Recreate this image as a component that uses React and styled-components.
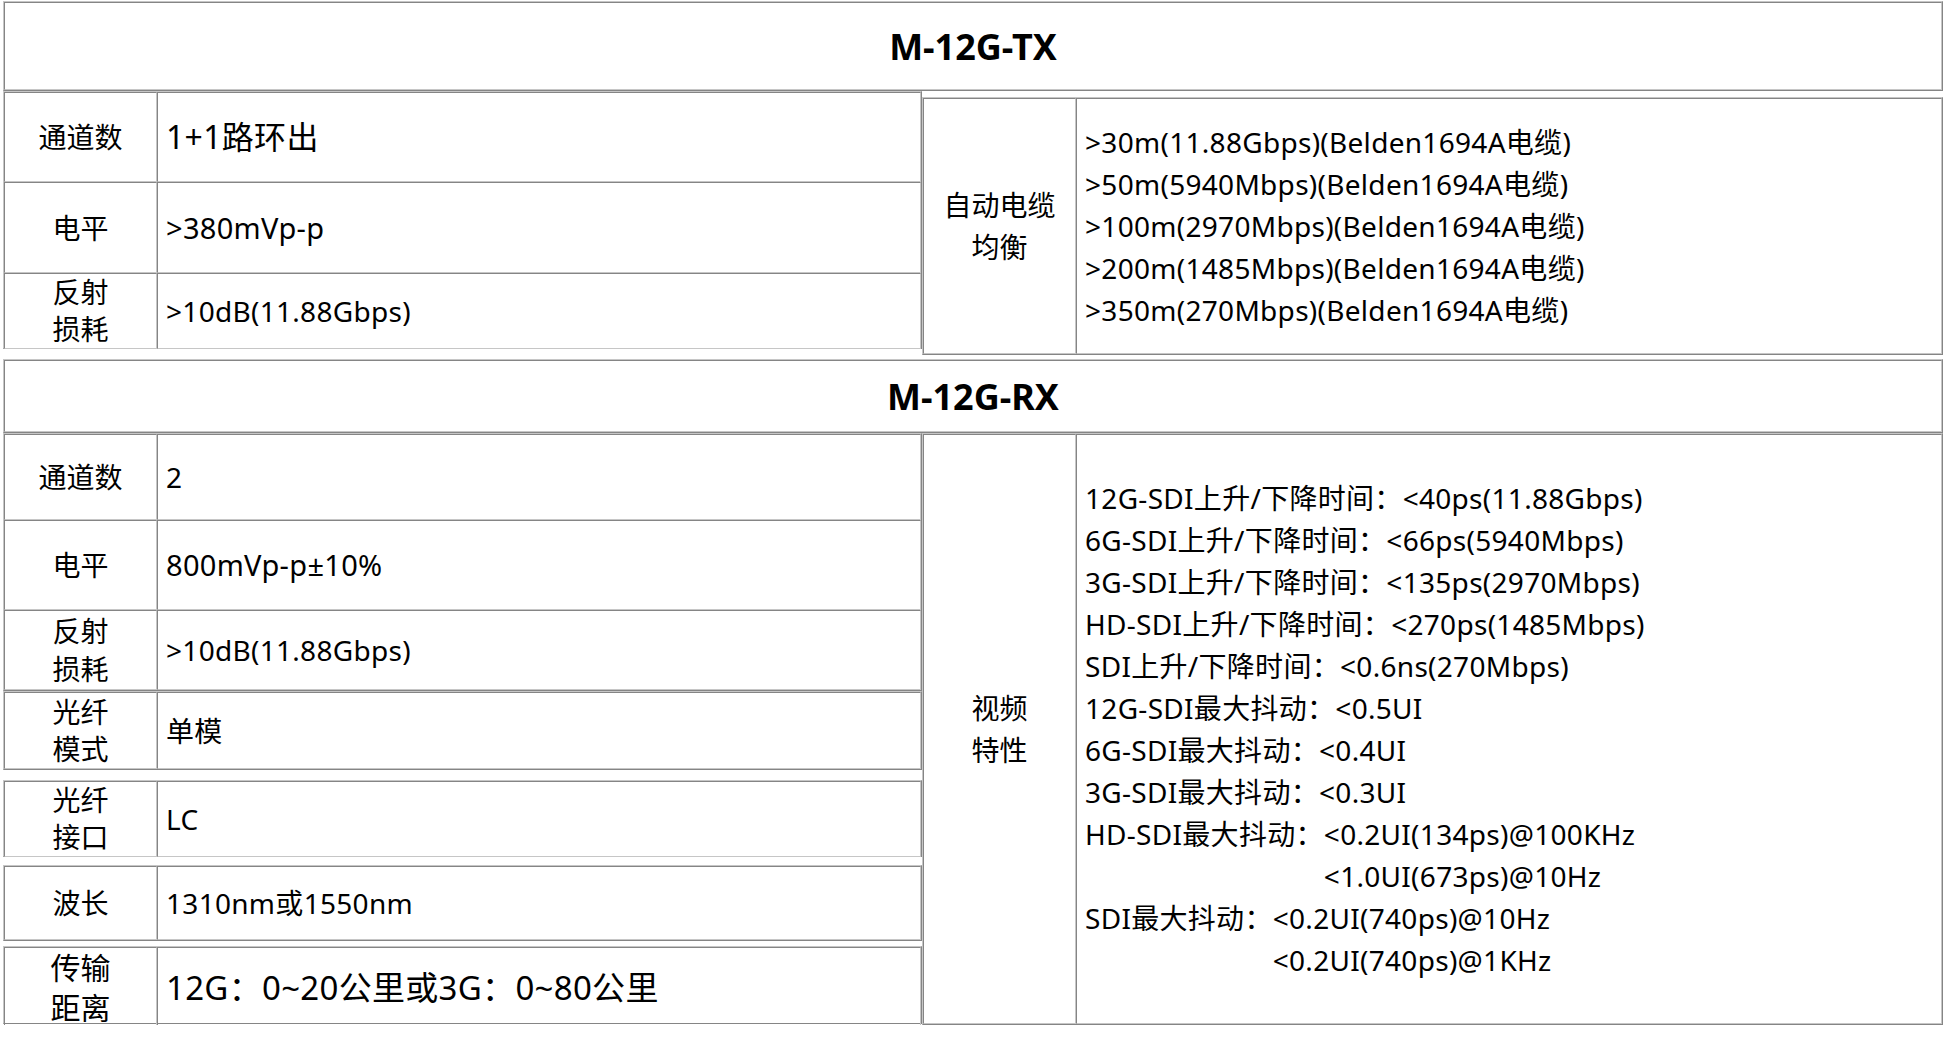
import styled, { createGlobalStyle } from "styled-components";

const LIGHT = "#c6c6c6";
const DARK = "#858585";

const GlobalStyle = createGlobalStyle`
  body {
    margin: 0;
    background: #fff;
    color: #000;
    font-family: "Noto Sans", "Noto Sans CJK SC", sans-serif;
  }
`;

const Page = styled.div`
  display: flex;
  flex-direction: column;
  padding: 1px 3px 0 3px;
`;

const Section = styled.section`
  display: flex;
  flex-direction: column;
  margin-top: ${(p) => p.$gap || 0}px;
`;

const TableBox = styled.div`
  display: flex;
  flex-direction: column;
  border: 1px solid;
  border-color: ${LIGHT} ${DARK} ${DARK} ${LIGHT};
  margin-top: ${(p) => p.$gap || 0}px;
`;

const TitleCell = styled.div`
  height: ${(p) => p.$h}px;
  box-sizing: border-box;
  border: 1px solid;
  border-color: ${DARK} ${LIGHT} ${LIGHT} ${DARK};
  display: flex;
  align-items: center;
  justify-content: center;
  font-size: 36px;
  font-weight: 700;
`;

const Split = styled.div`
  display: flex;
  align-items: flex-start;
`;

const LeftCol = styled.div`
  width: 919px;
  display: flex;
  flex-direction: column;
`;

const RightCol = styled.div`
  flex: 1;
  display: flex;
  flex-direction: column;
  margin-top: ${(p) => p.$gap || 0}px;
`;

const Row = styled.div`
  display: grid;
  grid-template-columns: 153px 1fr;
  height: ${(p) => p.$h}px;
`;

const Cell = styled.div`
  box-sizing: border-box;
  border: 1px solid;
  border-color: ${DARK} ${LIGHT} ${LIGHT} ${DARK};
  display: flex;
  align-items: center;
  font-size: ${(p) => p.$size || 28}px;
  line-height: 1.5;
  white-space: nowrap;
`;

const Label = styled(Cell)`
  justify-content: center;
  text-align: center;
  line-height: ${(p) => (p.$lh ? `${p.$lh}px` : "1.5")};
`;

const Value = styled(Cell)`
  padding-left: ${(p) => p.$pad || 8}px;
  letter-spacing: 0.3px;
`;

const Lines = styled.div`
  display: flex;
  flex-direction: column;
`;

const Line = styled.div`
  display: flex;
  align-items: flex-start;
`;

const Stack = styled.div`
  display: flex;
  flex-direction: column;
`;

const txLeft = [
  { label: ["通道数"], value: "1+1路环出", h: 90, vsize: 32 },
  { label: ["电平"], value: ">380mVp-p", h: 91, vsize: 29 },
  { label: ["反射", "损耗"], value: ">10dB(11.88Gbps)", h: 75, lh: 37 },
];

const txCable = [
  ">30m(11.88Gbps)(Belden1694A电缆)",
  ">50m(5940Mbps)(Belden1694A电缆)",
  ">100m(2970Mbps)(Belden1694A电缆)",
  ">200m(1485Mbps)(Belden1694A电缆)",
  ">350m(270Mbps)(Belden1694A电缆)",
];

const rxLeft = [
  {
    gap: 0,
    rows: [
      { label: ["通道数"], value: "2", h: 86 },
      { label: ["电平"], value: "800mVp-p±10%", h: 90, vsize: 29 },
      { label: ["反射", "损耗"], value: ">10dB(11.88Gbps)", h: 80, lh: 38 },
    ],
  },
  { gap: 0, rows: [{ label: ["光纤", "模式"], value: "单模", h: 77, lh: 37 }] },
  { gap: 10, rows: [{ label: ["光纤", "接口"], value: "LC", h: 75, lh: 37 }] },
  { gap: 8, rows: [{ label: ["波长"], value: "1310nm或1550nm", h: 74 }] },
  {
    gap: 5,
    rows: [
      {
        label: ["传输", "距离"],
        value: "12G：0~20公里或3G：0~80公里",
        h: 76,
        size: 30,
        lh: 40,
        vsize: 33,
      },
    ],
  },
];

const rxVideo = [
  ["12G-SDI上升/下降时间：", ["<40ps(11.88Gbps)"]],
  ["6G-SDI上升/下降时间：", ["<66ps(5940Mbps)"]],
  ["3G-SDI上升/下降时间：", ["<135ps(2970Mbps)"]],
  ["HD-SDI上升/下降时间：", ["<270ps(1485Mbps)"]],
  ["SDI上升/下降时间：", ["<0.6ns(270Mbps)"]],
  ["12G-SDI最大抖动：", ["<0.5UI"]],
  ["6G-SDI最大抖动：", ["<0.4UI"]],
  ["3G-SDI最大抖动：", ["<0.3UI"]],
  ["HD-SDI最大抖动：", ["<0.2UI(134ps)@100KHz", "<1.0UI(673ps)@10Hz"]],
  ["SDI最大抖动：", ["<0.2UI(740ps)@10Hz", "<0.2UI(740ps)@1KHz"]],
];

const LabelText = ({ lines }) => (
  <Lines>
    {lines.map((l) => (
      <span key={l}>{l}</span>
    ))}
  </Lines>
);

const SpecRow = ({ row }) => (
  <Row $h={row.h}>
    <Label $size={row.size} $lh={row.lh}>
      <LabelText lines={row.label} />
    </Label>
    <Value $size={row.vsize}>{row.value}</Value>
  </Row>
);

const App = () => (
  <>
    <GlobalStyle />
    <Page>
      <Section>
        <TableBox>
          <TitleCell $h={88}>M-12G-TX</TitleCell>
        </TableBox>
        <Split>
          <LeftCol>
            <TableBox>
              {txLeft.map((r) => (
                <SpecRow key={r.label.join()} row={r} />
              ))}
            </TableBox>
          </LeftCol>
          <RightCol $gap={6}>
            <TableBox>
              <Row $h={256}>
                <Label>
                  <LabelText lines={["自动电缆", "均衡"]} />
                </Label>
                <Value $pad={8}>
                  <Lines>
                    {txCable.map((t) => (
                      <span key={t}>{t}</span>
                    ))}
                  </Lines>
                </Value>
              </Row>
            </TableBox>
          </RightCol>
        </Split>
      </Section>

      <Section $gap={4}>
        <TableBox>
          <TitleCell $h={72}>M-12G-RX</TitleCell>
        </TableBox>
        <Split>
          <LeftCol>
            {rxLeft.map((t, i) => (
              <TableBox key={i} $gap={t.gap}>
                {t.rows.map((r) => (
                  <SpecRow key={r.label.join()} row={r} />
                ))}
              </TableBox>
            ))}
          </LeftCol>
          <RightCol>
            <TableBox>
              <Row $h={590}>
                <Label>
                  <LabelText lines={["视频", "特性"]} />
                </Label>
                <Value $pad={8}>
                  <Lines>
                    {rxVideo.map(([head, vals]) => (
                      <Line key={head}>
                        <span>{head}</span>
                        <Stack>
                          {vals.map((v) => (
                            <span key={v}>{v}</span>
                          ))}
                        </Stack>
                      </Line>
                    ))}
                  </Lines>
                </Value>
              </Row>
            </TableBox>
          </RightCol>
        </Split>
      </Section>
    </Page>
  </>
);

export default App;
